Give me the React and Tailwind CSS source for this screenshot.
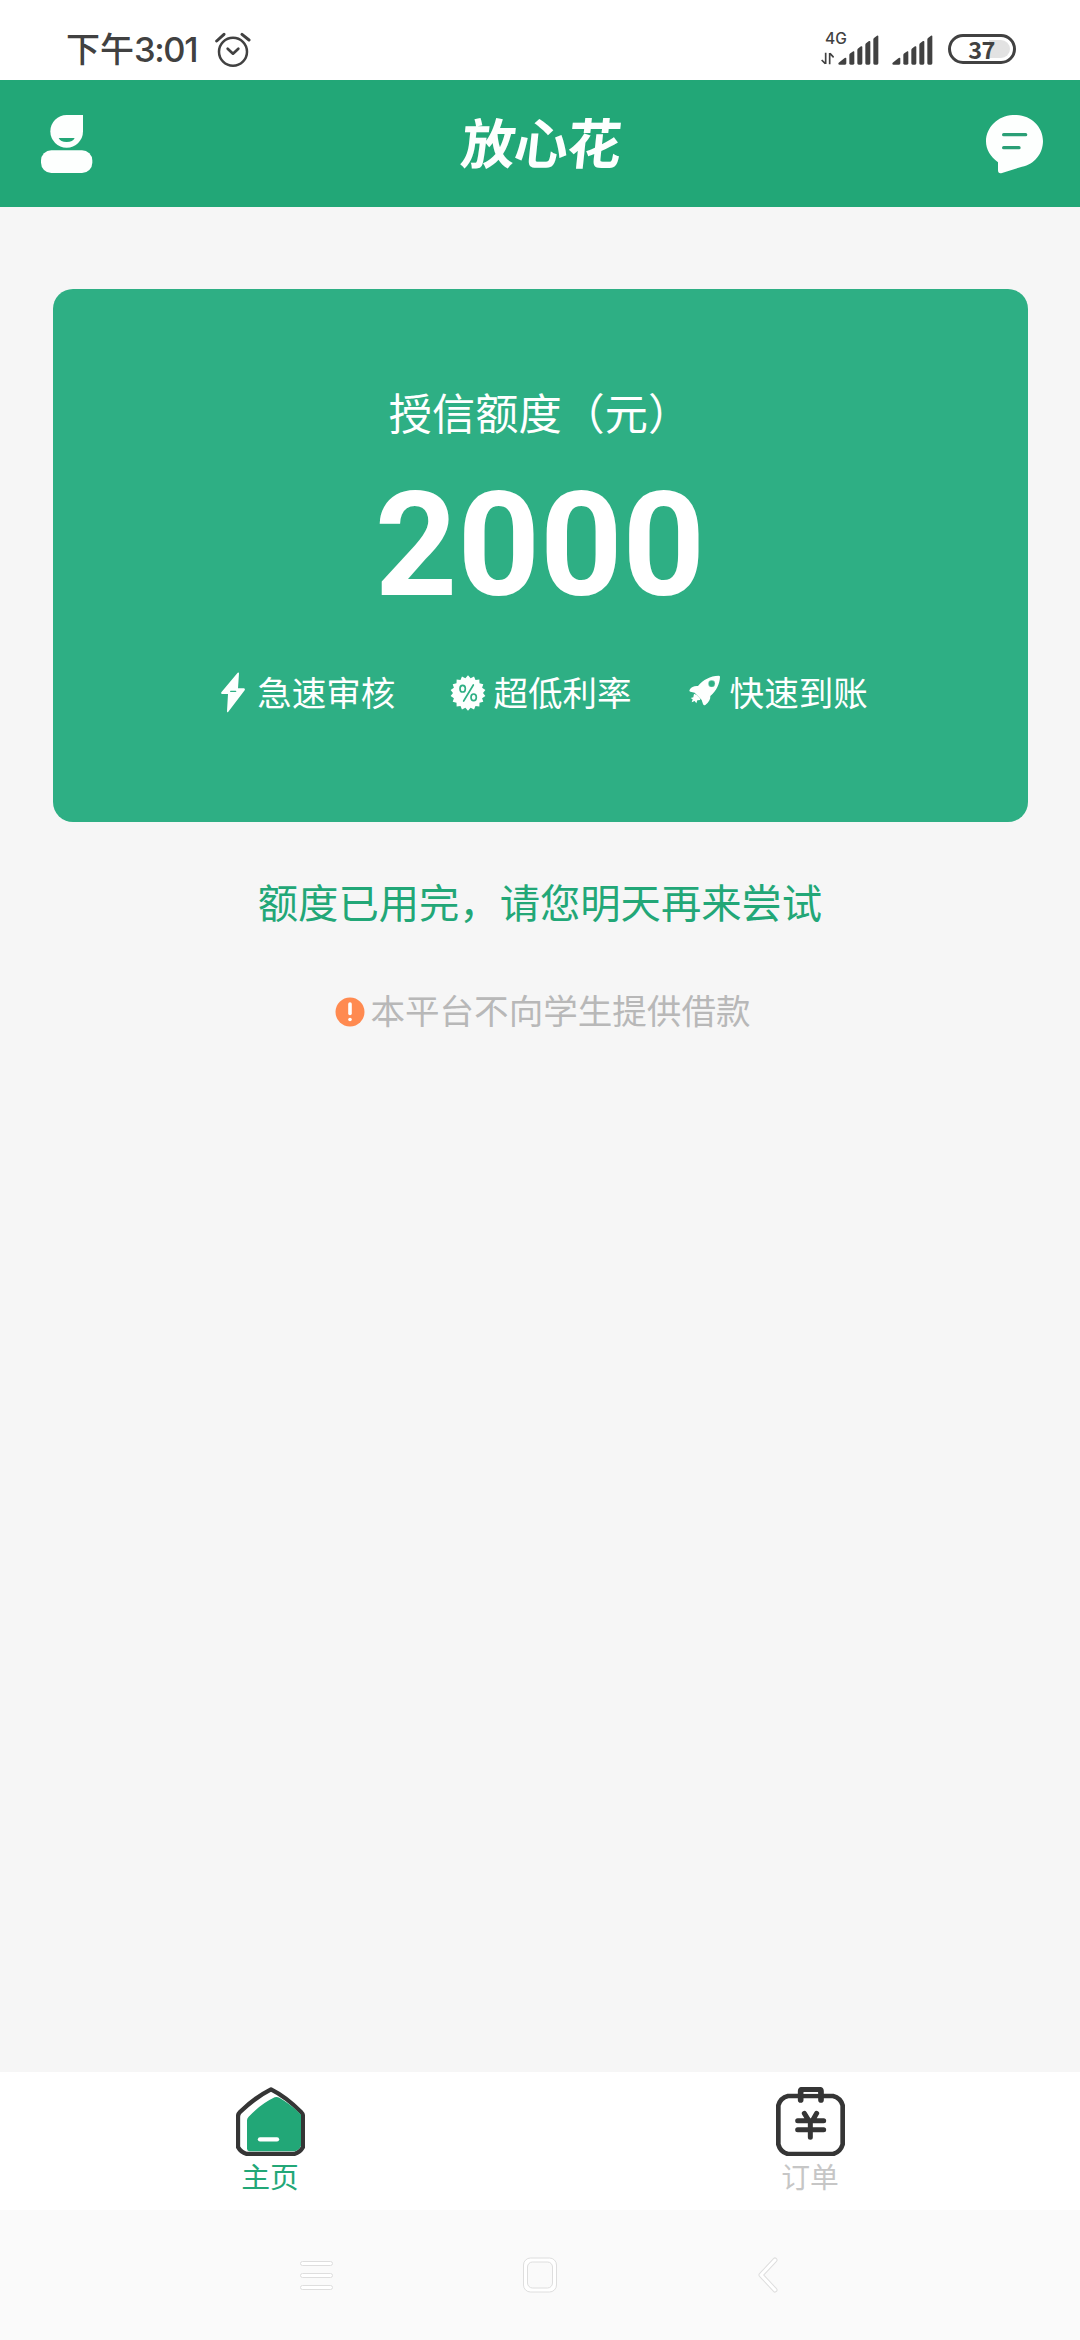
const Alarm = () => (
  <svg className="h-[36px] w-[36px]" viewBox="525 97 108 108" fill="none" stroke="#414141" strokeLinecap="round">
    <circle cx="579" cy="156" r="42" strokeWidth="7.5" />
    <path d="M563 147l16 15 16-15" strokeWidth="8" strokeLinejoin="round" />
    <path d="M530 124l22-20M627 121l-21-17" strokeWidth="9" />
  </svg>
);

const Bars = () => (
  <svg className="h-[30px] w-[41px]" viewBox="143 100 123 90" fill="#414141">
    <path d="M145 183l18-14q5-3 5 2v14q0 4-4 4h-16q-6-1-3-6z" />
    <path d="M177 160q0-3 3-5l9-6q3-1 3 2v34q0 4-4 4h-7q-4 0-4-4z" />
    <path d="M201 145q0-3 3-5l8-6q4-1 4 2v49q0 4-4 4h-7q-4 0-4-4z" />
    <path d="M225 129q0-3 3-5l8-6q4-1 4 2v65q0 4-4 4h-7q-4 0-4-4z" />
    <path d="M249 113q0-3 3-5l8-6q4-1 4 2v81q0 4-4 4h-7q-4 0-4-4z" />
  </svg>
);

const DataArrows = () => (
  <svg className="h-[13px] w-[13px]" viewBox="93 151 39 39" fill="none" stroke="#414141" strokeWidth="5">
    <path d="M107 153v34M106 186l-11-11" />
    <path d="M119 188v-34M120 155l11 12" />
  </svg>
);

const User = () => (
  <svg className="h-[60px] w-[54px]" viewBox="0 339 162 180" fill="#fdfffe">
    <path d="M80 342h49v49a49 49 0 1 1-49-49z" />
    <path d="M56 411h48q-5 12-24 12t-24-12z" fill="#22a777" />
    <rect x="3" y="448" width="154" height="68" rx="31" />
  </svg>
);

const Chat = () => (
  <svg className="h-[60px] w-[59px]" viewBox="585 339 177 180" fill="#fdfffe">
    <path d="M668 342h12c44 2 79 36 79 78 0 37-25 70-63 77l-60 19c-8 2-12-1-12-8v-24c-23-17-36-38-36-63 0-42 36-77 80-79z" />
    <path d="M641 401h66M641 440h46" stroke="#2a9f76" strokeWidth="10" strokeLinecap="round" />
  </svg>
);

const Bolt = () => (
  <svg className="mt-[2px] h-[42px] w-[36px]" viewBox="42 65 108 126">
    <path d="M113 70q4-2 4 2l-3 45h18q5 1 2 6l-49 64q-4 4-4-1l3-52H66q-5-1-2-5z" fill="#fdfffe" />
    <path d="M92 126h15" stroke="#2eaf84" strokeWidth="4" strokeLinecap="round" />
  </svg>
);

const badgePoints = Array.from({ length: 36 }, (_, i) => {
  const r = i % 2 ? 45 : 53;
  const a = (i * Math.PI) / 18 - Math.PI / 2;
  return `${803 + r * Math.cos(a)},${129 + r * Math.sin(a)}`;
}).join(" ");

const Percent = () => (
  <svg className="mt-[3px] h-[36px] w-[36px]" viewBox="749 75 108 108">
    <polygon points={badgePoints} fill="#fdfffe" />
    <g fill="none" stroke="#2eaf84" strokeWidth="5" strokeLinecap="round">
      <ellipse cx="787" cy="116" rx="8" ry="10" />
      <ellipse cx="820" cy="142" rx="8" ry="10" />
      <path d="M819 105l-29 48" />
    </g>
  </svg>
);

const Rocket = () => (
  <svg className="h-[36px] w-[36px]" viewBox="440 72 108 108" fill="#fdfffe">
    <path d="M535 80q4 0 4 4c-1 20-10 42-29 57 1 10-5 20-15 27q-5 2-7-3l-4-12-21-22-13-3q-5-2-2-6c5-8 13-12 25-11 16-19 36-30 62-31z" />
    <path d="M461 134l8 4 9 9 2 6-9 1-3 9-5-7-9 4 3-9-6-4 8-2z" />
    <circle cx="514" cy="104" r="10" fill="#2eaf84" stroke="#d9f3e9" strokeWidth="1" />
  </svg>
);

const Warning = () => (
  <svg className="h-[30px] w-[30px]" viewBox="0 0 30 30">
    <circle cx="15" cy="15" r="14.5" fill="#ff8a50" />
    <path d="M15 7v9.5" stroke="#fff" strokeWidth="3.6" strokeLinecap="round" />
    <circle cx="15" cy="22.5" r="1.8" fill="#fff" />
  </svg>
);

const Home = () => (
  <svg className="h-[69px] w-[69px]" viewBox="108 81 207 207">
    <path d="M213 88q46 23 90 68 6 6 6 14v91q-9 17-27 21H141q-18-4-27-21v-91q0-8 6-14 47-45 93-68z" fill="#fff" stroke="#353535" strokeWidth="13" strokeLinejoin="round" />
    <path d="M141 181q0-6 5-11 36-38 78-58 7-3 14 1 34 19 65 51v93q-5 13-19 17H148q-7-1-7-8z" fill="#22a777" />
    <path d="M180 238h51" stroke="#fff" strokeWidth="13" strokeLinecap="round" />
  </svg>
);

const Order = () => (
  <svg className="h-[69px] w-[69px]" viewBox="108 81 207 207" fill="none" stroke="#353535" strokeLinecap="round" strokeLinejoin="round">
    <path d="M144 108h135q23 6 29 28v117q-7 23-29 29H144q-23-6-29-29V136q6-22 29-28z" strokeWidth="14" />
    <path d="M182 120V94q0-5 5-5h51q5 0 5 5v26" strokeWidth="17" />
    <path d="M191 96h43v5h-43z" fill="#fff" stroke="none" />
    <path d="M193 160l13 21M230 160l-12 21M173 182h78M173 209h78M211 182v50" strokeWidth="15" />
  </svg>
);

const features = [
  [Bolt, "急速审核"],
  [Percent, "超低利率"],
  [Rocket, "快速到账"],
];

export default function App() {
  return (
    <div className="flex h-[2340px] w-[1080px] flex-col overflow-hidden bg-[#f6f6f6] font-['Noto_Sans_CJK_SC',sans-serif]">
      <div className="flex h-[80px] shrink-0 items-center bg-white pr-[64px] pl-[66px] text-[#414141]">
        <span className="mt-[16px] text-[34px] leading-[40px] font-medium">下午</span>
        <span className="mt-[19px] w-[64px] font-['Inter',sans-serif] text-[34.5px] leading-[40px] font-medium tracking-[-1.4px] whitespace-nowrap">3:01</span>
        <div className="mt-[20px] ml-[17px]"><Alarm /></div>
        <div className="mt-[16px] ml-auto flex h-[34px] items-end">
          <div className="flex h-[34px] w-[17px] flex-col justify-between">
            <span className="ml-[4px] font-['Inter',sans-serif] text-[15.5px] leading-[16px] font-medium">4G</span>
            <DataArrows />
          </div>
          <Bars />
          <div className="ml-[13px] h-[30px]"><Bars /></div>
          <div className="mb-px ml-[15px] flex h-[30px] w-[68px] items-center rounded-full border-[3px] border-[#414141] bg-white p-[3px]">
            <div className="flex h-full w-full items-center justify-center rounded-full bg-linear-to-r from-white from-62% to-[#e2e2e2] to-62% pr-px font-['Noto_Sans_CJK_SC',sans-serif] text-[23.5px] leading-[18px] font-bold tracking-[-0.5px]">37</div>
          </div>
        </div>
      </div>

      <header className="flex h-[127px] shrink-0 items-center bg-[#22a777] pr-[36px] pl-[40px]">
        <div className="flex-1"><User /></div>
        <h1 className="mr-[2px] mb-[6px] -skew-x-6 text-[54px] leading-[60px] font-bold tracking-[-1px] text-[#fdfffe]">放心花</h1>
        <div className="flex flex-1 justify-end"><Chat /></div>
      </header>

      <main className="flex flex-1 flex-col items-center pt-[82px]">
        <section className="flex h-[533px] w-[975px] flex-col items-center rounded-[20px] bg-[#2eaf84] pt-[92px] text-white">
          <p className="h-[60px] text-[43.2px] leading-[60px]">授信额度（元）</p>
          <p className="mt-[33px] font-['Roboto',sans-serif] text-[144px] leading-[144px] font-bold">2000</p>
          <div className="mt-[48px] ml-[2px] flex h-[50px] gap-[55px]">
            {features.map(([Icon, label]) => (
              <div key={label} className="flex items-center gap-[7px]">
                <Icon />
                <span className="text-[34.56px] leading-[50px]">{label}</span>
              </div>
            ))}
          </div>
        </section>
        <p className="mt-[49px] text-[40.32px] leading-[60px] text-[#22a777]">额度已用完，请您明天再来尝试</p>
        <div className="mt-[53px] mr-[-6px] flex items-center gap-[5px]">
          <div className="mt-[6px]"><Warning /></div>
          <span className="text-[34.56px] leading-[50px] text-[#b8b8b8]">本平台不向学生提供借款</span>
        </div>
      </main>

      <nav className="grid h-[138px] shrink-0 grid-cols-2 bg-white pt-[15px] text-[28.8px] leading-[40px]">
        <a className="flex flex-col items-center text-[#22a777]"><Home />主页</a>
        <a className="flex flex-col items-center text-[#c6c6c6]"><Order />订单</a>
      </nav>

      <footer className="flex h-[130px] shrink-0 items-center justify-between bg-[#fafafa] pr-[302px] pl-[300px]">
        <div className="flex flex-col gap-[7px]">
          <i className="h-[5px] w-[33px] rounded-full border border-[#dedede] bg-white" />
          <i className="h-[5px] w-[33px] rounded-full border border-[#dedede] bg-white" />
          <i className="h-[5px] w-[33px] rounded-full border border-[#dedede] bg-white" />
        </div>
        <svg className="ml-[-12px] h-[36px] w-[36px]" viewBox="0 0 36 36" stroke="#dedede">
          <rect x="1.5" y="1" width="33" height="34" rx="7" fill="#fff" />
          <rect x="5.5" y="5" width="25" height="26" rx="5" fill="#fafafa" />
        </svg>
        <svg className="h-[36px] w-[20px]" viewBox="0 0 20 36" fill="none" strokeLinecap="round" strokeLinejoin="round">
          <path d="M17 3L3 18l14 15" stroke="#dedede" strokeWidth="5" />
          <path d="M17 3L3 18l14 15" stroke="#fff" strokeWidth="3" />
        </svg>
      </footer>
    </div>
  );
}
